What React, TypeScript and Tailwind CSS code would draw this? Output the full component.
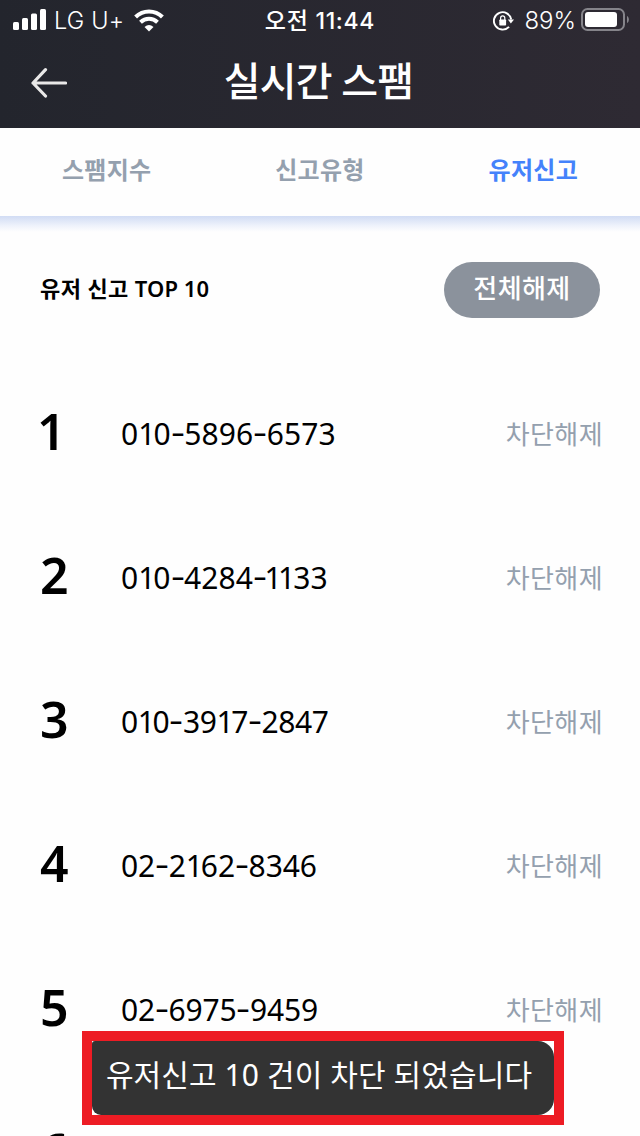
import { Fragment } from "react";

type Entry = { rank: number; phone: string; tracking: string };

const entries: Entry[] = [
  { rank: 1, phone: "010-5896-6573", tracking: "tracking-[0.05px]" },
  { rank: 2, phone: "010-4284-1133", tracking: "tracking-[0px]" },
  { rank: 3, phone: "010-3917-2847", tracking: "tracking-[-0.4px]" },
  { rank: 4, phone: "02-2162-8346", tracking: "tracking-[-0.1px]" },
  { rank: 5, phone: "02-6975-9459", tracking: "tracking-[-0.2px]" },
];

function Phone({ value }: { value: string }) {
  return (
    <>
      {value.split("").map((c, i) => {
        if (c === "-")
          return (
            <span key={i} className="inline-block w-[13.6px] origin-left -translate-y-[2px] scale-x-[1.45]">
              -
            </span>
          );
        if (c === "1")
          return (
            <span key={i} className={value[i - 1] === "-" ? "-ml-[2px] -mr-[2px]" : value[i - 1] === "1" ? "-ml-[1.5px] -mr-[2px]" : "-mr-[2px]"}>
              1
            </span>
          );
        return <Fragment key={i}>{c}</Fragment>;
      })}
    </>
  );
}

function StatusBar() {
  return (
    <div className="grid h-10 grid-cols-3 items-center pl-[13px] pr-[11px] text-[24px] leading-none">
      <div className="flex items-center">
        <svg width="34" height="22" viewBox="0 0 34 22" fill="#fff" className="shrink-0">
          <rect x="0" y="13" width="6" height="8" rx="1.5" />
          <rect x="9" y="9" width="6" height="12" rx="1.5" />
          <rect x="18" y="4.500" width="6" height="16.500" rx="1.500" />
          <rect x="27" y="0" width="6" height="21" rx="1.500" />
        </svg>
        <span className="ml-[7px] mt-[2px] w-[80px] whitespace-nowrap font-['Inter'] text-[23.5px] font-light tracking-[0.2px]">LG U+</span>
        <svg width="30" height="23" viewBox="0 0 30 23" className="shrink-0" fill="none" stroke="#fff" strokeWidth="4">
          <path d="M1.600 8 C9 .500 21 .500 28.400 8" />
          <path d="M6.500 13.200 C11.300 8.600 18.700 8.600 23.500 13.200" />
          <path d="M15 22.500 L10.500 18 Q15 14 19.500 18 Z" fill="#fff" stroke="none" />
        </svg>
      </div>
      <div className="mt-[2px] whitespace-nowrap pr-[2px] text-center font-['Inter','Noto_Sans_CJK_KR',sans-serif] text-[23px] font-medium tracking-[0.7px]">
        오전 11:44
      </div>
      <div className="flex items-center justify-end">
        <svg width="21" height="20" viewBox="0 0 21 20" fill="none" stroke="#fff" className="mt-[2px] shrink-0">
          <path d="M18.200 8.500 A8.700 8.700 0 1 0 16 15.800" strokeWidth="1.900" />
          <path d="M14.800 8.500 H21 L17.900 12.500 Z" fill="#fff" stroke="none" />
          <rect x="6.300" y="8.500" width="6.800" height="6" rx=".8" fill="#fff" stroke="none" />
          <path d="M7.600 9 V7 a2.100 2.100 0 0 1 4.200 0 V9" strokeWidth="1.200" />
        </svg>
        <span className="ml-[10px] mt-[2px] font-['Inter'] text-[24px] font-light">89%</span>
        <svg width="48" height="24" viewBox="0 0 48 24" className="-mt-px ml-[5px] shrink-0">
          <rect x="1" y="1" width="42" height="21" rx="5.500" fill="none" stroke="#85848a" strokeWidth="2" />
          <rect x="4" y="4" width="32" height="15" rx="3" fill="#fff" />
          <path d="M46 8 C48.500 9 48.500 14 46 15 Z" fill="#85848a" />
        </svg>
      </div>
    </div>
  );
}

export default function App() {
  return (
    <div className="relative h-[1136px] w-[640px] overflow-hidden bg-[#fefefe] font-['Noto_Sans','Noto_Sans_CJK_KR',sans-serif] text-black">
      <header className="h-32 bg-linear-to-r from-[#23252d] to-[#2e2a33] text-white">
        <StatusBar />
        <div className="grid h-[80px] grid-cols-[100px_1fr_100px] items-center">
          <svg width="36" height="30" viewBox="0 0 36 30" fill="none" stroke="#e9e8e8" strokeWidth="3.200" strokeLinecap="round" strokeLinejoin="round" className="ml-[31px] mt-[6px]">
            <path d="M14.500 1.700 L2 15 L14.500 28 M2 15 H34.500" />
          </svg>
          <h1 className="pt-[2px] pr-[3px] text-center text-[40px] font-medium leading-none tracking-[-0.8px]">실시간 스팸</h1>
        </div>
      </header>
      <nav className="grid h-[88px] grid-cols-3 items-center pb-[4px] text-center text-[24px] font-semibold tracking-[0.3px] text-[#94a0ae]">
        <span>스팸지수</span>
        <span>신고유형</span>
        <span className="text-[#4482fb]">유저신고</span>
      </nav>
      <div className="h-4 bg-linear-to-b from-[#d1dcf4] via-[#eef2fb] via-60% to-[#fefefe]" />
      <section className="flex h-[116px] items-center justify-between px-10">
        <h2 className="pb-[4px] text-[22px] font-semibold tracking-[0.4px]">
          유저 신고 <span className="tracking-[0.1px]">TOP 10</span>
        </h2>
        <button className="flex h-14 w-[156px] items-center justify-center rounded-full bg-[#8b929c] pb-1 text-[26px] font-medium tracking-[0.4px] text-white">
          전체해제
        </button>
      </section>
      <ol className="pt-[14px]">
        {entries.map((e) => (
          <li key={e.rank} className="flex h-36 items-center pl-10 pr-[37px]">
            <span className="w-[81px] pb-[7px] text-[50px] font-semibold leading-none">
              <span className={e.rank === 1 ? "-ml-[3px]" : ""}>{e.rank}</span>
            </span>
            <span className={"flex-1 whitespace-nowrap pb-[1px] text-[30px] " + e.tracking}>
              <Phone value={e.phone} />
            </span>
            <span className="text-[26px] tracking-[0.4px] text-[#94a0ae]">차단해제</span>
          </li>
        ))}
        <li className="flex h-36 items-center pl-10">
          <span className="w-[81px] pb-[7px] text-[50px] font-semibold leading-none">6</span>
        </li>
      </ol>
      <div className="absolute left-[82px] top-[1031px] h-[94px] w-[482px] border-[10px] border-[#ed1c24] bg-white">
        <div className="flex h-full items-center justify-center rounded-[16px] rounded-tl-[3px] rounded-bl-[9px] bg-[#333333] pb-[8px] pr-[8px] text-[30px] font-normal text-white">
          <span className="whitespace-nowrap tracking-[0.1px]">유저신고 10 건이 차단 되었습니다</span>
        </div>
      </div>
    </div>
  );
}
